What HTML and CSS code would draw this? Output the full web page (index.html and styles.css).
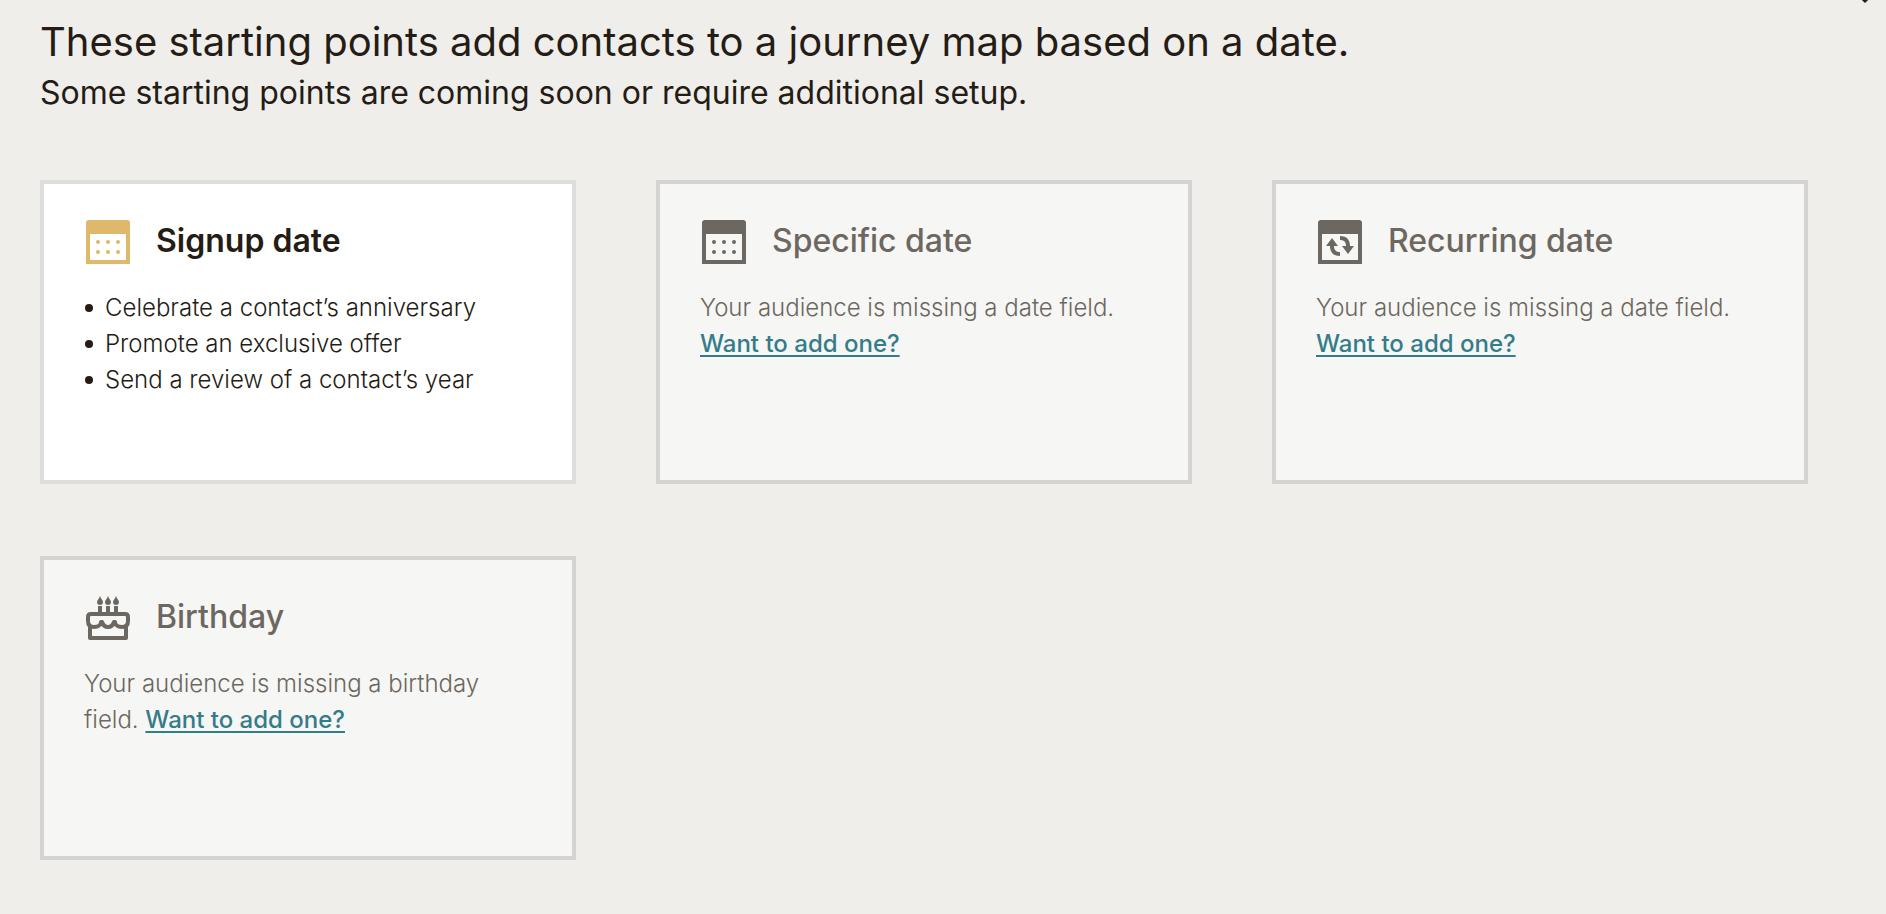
FILE: index.html
```html
<!DOCTYPE html>
<html lang="en">
<head>
  <meta charset="utf-8">
  <meta name="viewport" content="width=device-width, initial-scale=1">
  <title>Journey starting points</title>
  <link rel="stylesheet" href="styles.css">
</head>
<body>
  <button class="collapse" type="button" aria-label="Collapse section">
    <svg class="collapse-icon" viewBox="0 0 24 24" aria-hidden="true"><path d="M4 13l8 8 8-8"/></svg>
  </button>
  <main class="page">
    <header class="intro">
      <h1 class="intro-title">These starting points add contacts to a journey map based on a date.</h1>
      <p class="intro-note">Some starting points are coming soon or require additional setup.</p>
    </header>

    <section class="cards" aria-label="Starting points">
      <article class="card card-active">
        <div class="card-head">
          <svg class="card-icon" viewBox="0 0 48 48" aria-hidden="true">
            <path fill-rule="evenodd" d="M5 2H43Q46 2 46 5V46H2V5Q2 2 5 2ZM6 16V42H42V16Z"/>
            <circle cx="14" cy="24" r="2"/><circle cx="24" cy="24" r="2"/><circle cx="34" cy="24" r="2"/>
            <circle cx="14" cy="34" r="2"/><circle cx="24" cy="34" r="2"/><circle cx="34" cy="34" r="2"/>
          </svg>
          <h2 class="card-title">Signup date</h2>
        </div>
        <ul class="card-list">
          <li class="card-item">Celebrate a contact’s anniversary</li>
          <li class="card-item">Promote an exclusive offer</li>
          <li class="card-item">Send a review of a contact’s year</li>
        </ul>
      </article>

      <article class="card">
        <div class="card-head">
          <svg class="card-icon" viewBox="0 0 48 48" aria-hidden="true">
            <path fill-rule="evenodd" d="M5 2H43Q46 2 46 5V46H2V5Q2 2 5 2ZM6 16V42H42V16Z"/>
            <circle cx="14" cy="24" r="2"/><circle cx="24" cy="24" r="2"/><circle cx="34" cy="24" r="2"/>
            <circle cx="14" cy="34" r="2"/><circle cx="24" cy="34" r="2"/><circle cx="34" cy="34" r="2"/>
          </svg>
          <h2 class="card-title">Specific date</h2>
        </div>
        <p class="card-text">Your audience is missing a date field. <a class="card-link" href="#">Want to add one?</a></p>
      </article>

      <article class="card">
        <div class="card-head">
          <svg class="card-icon" viewBox="0 0 48 48" aria-hidden="true">
            <path fill-rule="evenodd" d="M5 2H43Q46 2 46 5V46H2V5Q2 2 5 2ZM6 16V42H42V16Z"/>
            <path d="M16 20L22 28H18C18 32 20 34 24 34V38C17 38 14 34 14 28H10Z"/>
            <path d="M32 36L38 28H34C34 22 31 18 24 18V22C28 22 30 24 30 28H26Z"/>
          </svg>
          <h2 class="card-title">Recurring date</h2>
        </div>
        <p class="card-text">Your audience is missing a date field. <a class="card-link" href="#">Want to add one?</a></p>
      </article>

      <article class="card">
        <div class="card-head">
          <svg class="card-icon" viewBox="0 0 48 48" aria-hidden="true">
            <path d="M16 2C17 5 19 6 19 8A3 3 0 0 1 13 8C13 6 15 5 16 2ZM24 2C25 5 27 6 27 8A3 3 0 0 1 21 8C21 6 23 5 24 2ZM32 2C33 5 35 6 35 8A3 3 0 0 1 29 8C29 6 31 5 32 2Z"/>
            <path d="M14 12h4v7h-4zM22 12h4v7h-4zM30 12h4v7h-4z"/>
            <path class="outline" d="M6 32V44H42V32M7 20H41Q44 20 44 23V27C44 31 42 33 38 33C34 33 31 31 31 28H30C29 31 27 33 24 33C21 33 19 31 18 28H17C17 31 14 33 10 33C6 33 4 31 4 27V23Q4 20 7 20Z"/>
          </svg>
          <h2 class="card-title">Birthday</h2>
        </div>
        <p class="card-text">Your audience is missing a birthday field. <a class="card-link" href="#">Want to add one?</a></p>
      </article>
    </section>
  </main>
</body>
</html>
```
FILE: styles.css
```css
* {
  box-sizing: border-box;
}

body {
  margin: 0;
  background: #efeeea;
  color: #241c15;
  font-family: Inter, "Liberation Sans", sans-serif;
}

h1, h2, p, ul {
  margin: 0;
}

.page {
  padding: 16px 78px 52px 40px;
}

.intro {
  margin-bottom: 62px;
}

.intro-title {
  font-size: 40px;
  font-weight: 400;
  line-height: 52px;
}

.intro-note {
  font-size: 32px;
  line-height: 50px;
}

.cards {
  display: grid;
  grid-template-columns: repeat(3, minmax(0, 1fr));
  gap: 72px 80px;
}

.card {
  min-height: 304px;
  padding: 34px 40px;
  border: 4px solid #d5d4d2;
  background: #f6f6f4;
  color: #6c6760;
}

.card-active {
  border-color: #dddddb;
  background: #fff;
  color: #241c15;
}

.card-head {
  display: flex;
  align-items: flex-start;
  gap: 24px;
  margin-bottom: 24px;
}

.card-icon {
  flex: none;
  width: 48px;
  height: 48px;
  fill: currentColor;
}

.card-active .card-icon {
  color: #dfb86c;
}

.outline {
  fill: none;
  stroke: currentColor;
  stroke-width: 4;
  stroke-linejoin: round;
}

.card-title {
  font-size: 32px;
  font-weight: 500;
  line-height: 46px;
}

.card-active .card-title {
  font-weight: 600;
}

.card-text,
.card-list {
  font-size: 24px;
  font-weight: 300;
  line-height: 36px;
}

.card-list {
  padding: 0;
  list-style: none;
}

.card-item {
  display: flex;
  align-items: center;
  gap: 12px;
}

.card-item::before {
  content: "";
  flex: none;
  width: 8px;
  height: 8px;
  margin-left: 1px;
  border-radius: 50%;
  background: currentColor;
}

.card-link {
  color: #337c89;
  font-weight: 500;
  text-decoration-line: underline;
  text-decoration-thickness: 2px;
  text-underline-offset: 3px;
}

/* Collapse control, scrolled mostly above the top edge */
.collapse {
  position: absolute;
  top: -20px;
  right: 9px;
  padding: 0;
  border: 0;
  background: none;
  color: #241c15;
}

.collapse-icon {
  display: block;
  width: 24px;
  height: 24px;
  fill: none;
  stroke: currentColor;
  stroke-width: 3;
  stroke-linecap: round;
}
```
